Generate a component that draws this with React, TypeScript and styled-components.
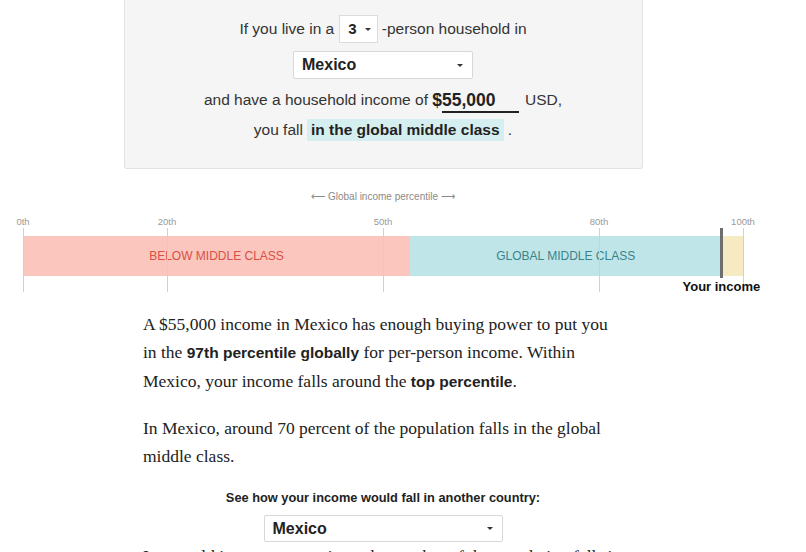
import React from "react";
import styled, { createGlobalStyle } from "styled-components";

const Global = createGlobalStyle`
  html, body { margin: 0; padding: 0; background: #fff; }
  body { font-family: "Liberation Sans", Arial, sans-serif; color: #333; overflow: hidden; }
`;

const Page = styled.div`
  width: 766px;
  display: flex;
  flex-direction: column;
  align-items: center;
`;

const Panel = styled.div`
  width: 519px;
  box-sizing: border-box;
  background: #f5f5f5;
  border: 1px solid #e2e2e2;
  border-top: none;
  border-radius: 0 0 3px 3px;
  padding: 14px 0 23px;
  display: flex;
  flex-direction: column;
  align-items: center;
  font-size: 15.5px;
  color: #333;
`;

const Line = styled.div`
  height: 30px;
  line-height: 30px;
  display: flex;
  align-items: center;
  white-space: pre;
`;

const SmallSelect = styled.div`
  height: 28px;
  box-sizing: border-box;
  padding: 0 6px 0 8px;
  margin: 0 4px 0 5px;
  background: #fff;
  border: 1px solid #dcdcdc;
  display: flex;
  align-items: center;
  gap: 4px;
  font-weight: bold;
  font-size: 15px;
  color: #222;
`;

const Caret = styled.span<{ $size?: number }>`
  width: 0;
  height: 0;
  border-left: ${(p) => p.$size ?? 3.5}px solid transparent;
  border-right: ${(p) => p.$size ?? 3.5}px solid transparent;
  border-top: ${(p) => p.$size ?? 3.5}px solid #333;
  display: inline-block;
`;

const CountrySelect = styled.div<{ $w: number; $h: number }>`
  width: ${(p) => p.$w}px;
  height: ${(p) => p.$h}px;
  box-sizing: border-box;
  background: #fff;
  border: 1px solid #d8d8d8;
  border-radius: 2px;
  display: flex;
  align-items: center;
  justify-content: space-between;
  padding: 0 9px 0 8px;
  font-weight: bold;
  font-size: 16px;
  color: #222;
`;

const SelectRow = styled.div`
  margin: 7px 0 6px;
`;

const Dollar = styled.span`
  font-weight: bold;
  font-size: 17.5px;
  color: #222;
`;

const Income = styled.span`
  display: inline-block;
  width: 77px;
  margin: 2px 6px 0 0;
  border-bottom: 2px solid #222;
  line-height: 21px;
  font-weight: bold;
  font-size: 17.5px;
  color: #222;
`;

const Highlight = styled.span`
  background: #d5eef0;
  font-weight: bold;
  color: #222;
  padding: 0 4px;
  margin-left: 4px;
  line-height: 22px;
`;

const AxisTitle = styled.div`
  margin-top: 21px;
  font-size: 10px;
  line-height: 14px;
  color: #8a8a8a;
`;

const Plot = styled.div`
  position: relative;
  align-self: stretch;
  margin: 12px 23px 0;
  height: 80px;
`;

const Tick = styled.div`
  position: absolute;
  top: 0;
  width: 0;
`;

const TickLabel = styled.div`
  position: absolute;
  top: 0;
  left: 0;
  transform: translateX(-50%);
  font-size: 9.5px;
  line-height: 12px;
  color: #9a9a9a;
  white-space: nowrap;
`;

const TickLine = styled.div`
  position: absolute;
  top: 12px;
  left: -0.5px;
  width: 1px;
  height: 64px;
  background: #d0d0d0;
`;

const Bar = styled.div`
  position: absolute;
  top: 20px;
  left: 0;
  right: 0;
  height: 40px;
  display: flex;
`;

const Segment = styled.div<{ $bg: string; $fg: string }>`
  height: 100%;
  background: ${(p) => p.$bg};
  color: ${(p) => p.$fg};
  display: flex;
  align-items: center;
  justify-content: center;
  font-size: 12px;
  opacity: 0.95;
`;

const Marker = styled.div`
  position: absolute;
  top: 12px;
  width: 0;
`;

const MarkerLine = styled.div`
  position: absolute;
  left: -1.5px;
  top: 0;
  width: 3px;
  height: 50px;
  background: #6e6e6e;
`;

const MarkerLabel = styled.div`
  position: absolute;
  top: 52px;
  left: 0;
  transform: translateX(-50%);
  font-size: 13px;
  font-weight: bold;
  color: #111;
  white-space: nowrap;
  line-height: 14px;
`;

const Prose = styled.p`
  width: 480px;
  margin: 0;
  font-family: "Liberation Serif", "Times New Roman", serif;
  font-size: 17.5px;
  line-height: 28px;
  color: #222;
  & + & { margin-top: 18px; }
  b { font-family: "Liberation Sans", Arial, sans-serif; font-size: 15.5px; color: #222; }
`;

const FirstProse = styled(Prose)`
  margin-top: 14px;
`;

const Prompt = styled.div`
  margin-top: 20px;
  font-size: 12.8px;
  line-height: 16px;
  font-weight: bold;
  color: #222;
`;

const BottomSelect = styled.div`
  margin-top: 9px;
`;

const CutProse = styled(Prose)`
  margin-top: 0;
`;

const ticks = [0, 20, 50, 80, 100];
const segments = [
  { from: 0, to: 53.75, bg: "#fac3ba", fg: "#d8473d", label: "BELOW MIDDLE CLASS" },
  { from: 53.75, to: 97, bg: "#bce4e7", fg: "#2f7d85", label: "GLOBAL MIDDLE CLASS" },
  { from: 97, to: 100, bg: "#f6e9bf", fg: "#8a7a3a", label: "" },
];
const you = 97;

export default function App() {
  return (
    <>
      <Global />
      <Page>
        <Panel>
          <Line>
            {"If you live in a"}
            <SmallSelect>
              3 <Caret />
            </SmallSelect>
            {"-person household in"}
          </Line>
          <SelectRow>
            <CountrySelect $w={180} $h={28}>
              Mexico <Caret />
            </CountrySelect>
          </SelectRow>
          <Line>
            {"and have a household income of "}
            <Dollar>$</Dollar>
            <Income>55,000</Income>
            {"USD,"}
          </Line>
          <Line>
            {"you fall"}
            <Highlight>in the global middle class</Highlight>
            {" ."}
          </Line>
        </Panel>

        <AxisTitle>⟵ Global income percentile ⟶</AxisTitle>
        <Plot>
          <Bar>
            {segments.map((s) => (
              <Segment key={s.from} $bg={s.bg} $fg={s.fg} style={{ width: `${s.to - s.from}%` }}>
                {s.label}
              </Segment>
            ))}
          </Bar>
          {ticks.map((t) => (
            <Tick key={t} style={{ left: `${t}%` }}>
              <TickLabel>{t}th</TickLabel>
              <TickLine />
            </Tick>
          ))}
          <Marker style={{ left: `${you}%` }}>
            <MarkerLine />
            <MarkerLabel>Your income</MarkerLabel>
          </Marker>
        </Plot>

        <FirstProse>
          A $55,000 income in Mexico has enough buying power to put you in the <b>97th percentile globally</b> for
          per-person income. Within Mexico, your income falls around the <b>top percentile</b>.
        </FirstProse>
        <Prose>In Mexico, around 70 percent of the population falls in the global middle class.</Prose>

        <Prompt>See how your income would fall in another country:</Prompt>
        <BottomSelect>
          <CountrySelect $w={239} $h={27}>
            Mexico <Caret />
          </CountrySelect>
        </BottomSelect>
        <CutProse>In a world income comparison, the number of the population falls in the global middle class.</CutProse>
      </Page>
    </>
  );
}
